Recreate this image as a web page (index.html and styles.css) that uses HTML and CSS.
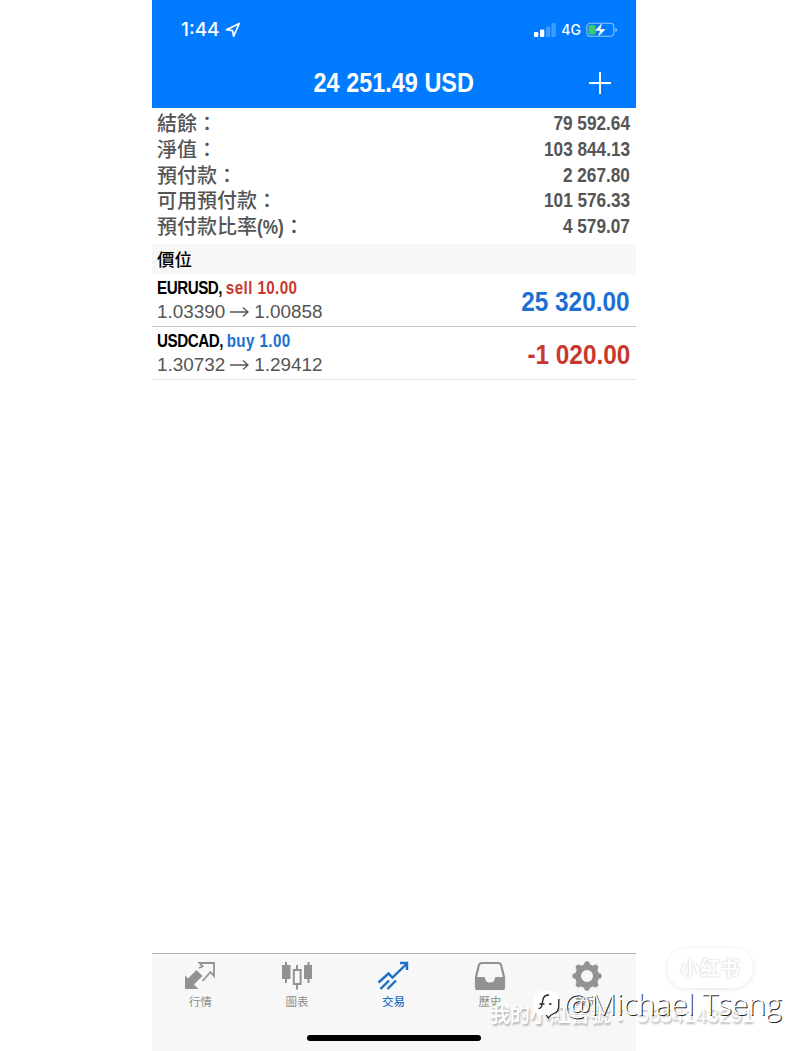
FILE: index.html
```html
<!DOCTYPE html>
<html lang="zh-Hant">
<head>
    <meta charset="UTF-8">
    <meta name="viewport" content="width=device-width, initial-scale=1.0">
    <title>交易</title>
    <link rel="stylesheet" href="styles.css">
</head>
<body>
    <div class="phone">
        <header>
            <div class="status-bar">
                <div class="status-time">
                    <span>1:44</span>
                    <svg width="16" height="16" viewBox="0 0 16 16" fill="none" stroke="currentColor" stroke-width="1.7" stroke-linejoin="round">
                        <path d="M14.2 1.5 1.5 7.7 7.5 8.6 8.7 14.2z"/>
                    </svg>
                </div>
                <div class="status-icons">
                    <svg width="22" height="14" viewBox="0 0 22 14" fill="#fff">
                        <rect x="0" y="9" width="4.3" height="5" rx="1"/>
                        <rect x="6" y="6.5" width="4.3" height="7.5" rx="1"/>
                        <rect x="12" y="3.5" width="4.3" height="10.5" rx="1" opacity=".25"/>
                        <rect x="17.5" y="0" width="4.3" height="14" rx="1" opacity=".25"/>
                    </svg>
                    <span>4G</span>
                    <svg width="32" height="18" viewBox="0 0 32 18">
                        <rect x=".8" y="2.3" width="27" height="13" rx="3.5" fill="none" stroke="#8fc5ee" stroke-width="1.1"/>
                        <rect x="2.5" y="4" width="7" height="9.6" rx="1.5" fill="#3cc871"/>
                        <path d="M29.4 6.7v4.4q1.8-.9 1.8-2.2t-1.8-2.2z" fill="#8fc5ee"/>
                        <path d="M16.8.8 8.5 10h5.3l-2.5 7L20 7.9h-5.3z" fill="#fff" stroke="#007aff" stroke-width=".5"/>
                    </svg>
                </div>
            </div>
            <div class="title-bar">
                <h1>24 251.49 USD</h1>
                <svg class="add" width="22" height="22" viewBox="0 0 22 22" stroke="#fff" stroke-width="2">
                    <path d="M11 0v22M0 11h22"/>
                </svg>
            </div>
        </header>

        <main>
            <div class="summary">
                <div class="summary-row"><span>結餘：</span><b>79 592.64</b></div>
                <div class="summary-row"><span>淨值：</span><b>103 844.13</b></div>
                <div class="summary-row"><span>預付款：</span><b>2 267.80</b></div>
                <div class="summary-row"><span>可用預付款：</span><b>101 576.33</b></div>
                <div class="summary-row"><span>預付款比率<span class="unit">(%)</span>：</span><b>4 579.07</b></div>
            </div>

            <h2>價位</h2>

            <div class="position">
                <div>
                    <div class="symbol">EURUSD, <span class="sell">sell 10.00</span></div>
                    <div class="prices">1.03390
                        <svg width="19" height="12" viewBox="0 0 19 12" fill="none" stroke="currentColor" stroke-width="1.3"><path d="M0 6h18M13 1.5 18 6l-5 4.5"/></svg>
                        1.00858</div>
                </div>
                <div class="profit buy">25 320.00</div>
            </div>
            <div class="position">
                <div>
                    <div class="symbol">USDCAD, <span class="buy">buy 1.00</span></div>
                    <div class="prices">1.30732
                        <svg width="19" height="12" viewBox="0 0 19 12" fill="none" stroke="currentColor" stroke-width="1.3"><path d="M0 6h18M13 1.5 18 6l-5 4.5"/></svg>
                        1.29412</div>
                </div>
                <div class="profit sell">-1 020.00</div>
            </div>
        </main>

        <nav>
            <div class="tab">
                <svg width="32" height="30" viewBox="0 0 32 30">
                    <path d="M1 28V14.500l3 3 8.500-8.500 6 6-8.500 8.500 4.500 4.500z" fill="#929292"/>
                    <path d="M15 7l3.500-1.500L15.500 2H30v13l-3.500-4L18.500 20" fill="none" stroke="#929292" stroke-width="1.800"/>
                </svg>
                <span>行情</span>
            </div>
            <div class="tab">
                <svg width="32" height="30" viewBox="0 0 32 30" fill="#929292">
                    <path d="M4 1h2v3h3.500v14H6v4H4v-4H1V4h3zM26.500 1h2v3H31v14h-2.500v4h-2v-4H23V4h3.500z"/>
                    <path d="M16 4v5M16 23v5.500M12.800 9h6.800v14h-6.800z" fill="none" stroke="#929292" stroke-width="2"/>
                </svg>
                <span>圖表</span>
            </div>
            <div class="tab active">
                <svg width="32" height="30" viewBox="0 0 32 30" fill="none" stroke="currentColor" stroke-width="2.4">
                    <path d="M1.500 21.500 11.500 12.500l4 4L29.500 3M23 2h7v7M3.500 28l8.500-8.500M10.500 28l8.500-8.500"/>
                </svg>
                <span>交易</span>
            </div>
            <div class="tab">
                <svg width="32" height="30" viewBox="0 0 32 30">
                    <path d="M7.500 2h17Q26.500 2 27.200 4.500L30 16v10.500Q30 28 28.500 28h-25Q2 28 2 26.500V16L4.800 4.500Q5.500 2 7.500 2z" fill="none" stroke="#929292" stroke-width="2.200"/>
                    <path d="M2 16h8q1.200 0 1.300 2 .3 3.500 4.700 3.500t4.700-3.500q.1-2 1.300-2h8v10.500q0 1.500-1.500 1.500h-25Q2 28 2 26.500z" fill="#929292"/>
                </svg>
                <span>歷史</span>
            </div>
            <div class="tab">
                <svg width="32" height="30" viewBox="0 0 32 30" fill="none" stroke="#929292">
                    <circle cx="16" cy="15" r="9" stroke-width="6"/>
                    <path d="M16 3v1M16 26v1M4 15h1M27 15h1M7.500 6.500l.7.700M23.800 22.800l.7.700M7.500 23.500l.7-.7M23.800 7.200l.7-.7" stroke-width="5.500" stroke-linecap="round"/>
                </svg>
                <span>設定</span>
            </div>
            <div class="home-indicator"></div>
        </nav>
    </div>

    <div class="badge">小红书</div>
    <div class="account-mark">我的小紅書號：<span>5654143291</span></div>
    <div class="author-mark">
        <svg width="27" height="30" viewBox="0 0 27 30">
            <path d="M9 1h9q8 0 8 8v8q0 6-5 7-3 1-6 4-1-3-3-3H9q-8 0-8-8V9q0-8 8-8z" fill="#fff"/>
            <path d="M5.500 18.500q3 0 3.500-4l1-5q.8-4.500 6-4.500M6.500 14h5M16 14h2.500M25.800 9v7q0 6-5 7.500-3 1-5.500 4.500l-2-3" fill="none" stroke="#222" stroke-width="1.300"/>
        </svg>
        <span>@Michael Tseng</span>
    </div>
</body>
</html>
```
FILE: styles.css
```css
* {
    margin: 0;
    padding: 0;
    box-sizing: border-box;
}

body {
    position: relative;
    height: 1051px;
    overflow: hidden;
    background: #fff;
    font-family: "Liberation Sans", "Noto Sans CJK TC", sans-serif;
}

.phone {
    display: flex;
    flex-direction: column;
    width: 484px;
    height: 1051px;
    margin: 0 auto;
}

header {
    height: 108px;
    background: #007aff;
    color: #fff;
}

.status-bar {
    display: flex;
    justify-content: space-between;
    align-items: center;
    height: 59px;
    padding: 0 18px 0 29px;
}

.status-time,
.status-icons {
    display: flex;
    align-items: center;
}

.status-time {
    gap: 5px;
    font: 500 19px Inter, sans-serif;
}

.status-icons {
    gap: 5px;
    font: 500 14px Inter, sans-serif;
}

.title-bar {
    display: grid;
    grid-template-columns: 1fr auto 1fr;
    align-items: center;
    height: 47px;
    padding-right: 25px;
    padding-left: 25px;
}

h1 {
    grid-column: 2;
    font: bold 28px "Liberation Sans", sans-serif;
    transform: scaleX(0.838);
}

.add {
    justify-self: end;
}

main {
    flex: 1;
}

.summary {
    height: 136px;
    padding: 2px 6px 0 5px;
    color: #555;
}

.summary-row {
    display: flex;
    justify-content: space-between;
    height: 25.8px;
    font: 500 20px/25px "Noto Sans CJK TC", sans-serif;
}

.summary-row b {
    font: bold 20px/27px "Liberation Sans", sans-serif;
    transform: scaleX(0.86);
    transform-origin: right;
}

.unit {
    display: inline-block;
    margin-right: -4px;
    font: bold 20px/25px "Liberation Sans", sans-serif;
    transform: scaleX(0.86);
    transform-origin: left;
}

h2 {
    height: 30px;
    padding-left: 5px;
    background: #f7f7f7;
    font: 500 17.5px/30px "Noto Sans CJK TC", sans-serif;
}

.position {
    display: flex;
    justify-content: space-between;
    align-items: center;
    height: 53px;
    padding: 0 6px 0 5px;
    border-bottom: 1px solid #c4c4c4;
}

.position:last-child {
    border-color: #e4e4e4;
}

.symbol {
    font: bold 19px/24px "Liberation Sans", sans-serif;
    letter-spacing: -0.6px;
    transform: scaleX(0.8);
    transform-origin: left;
}

.symbol span {
    letter-spacing: 0.5px;
}

.prices {
    display: flex;
    align-items: center;
    gap: 5px;
    color: #555;
    font-size: 18.9px;
    line-height: 24px;
}

.profit {
    padding-top: 3px;
    font: bold 28px "Liberation Sans", sans-serif;
    transform: scaleX(0.87);
    transform-origin: right;
}

.buy {
    color: #1e6fd2;
}

.sell {
    color: #c8382f;
}

nav {
    position: relative;
    display: flex;
    height: 98px;
    padding: 7px 1px 0 0;
    background: #f7f7f7;
    border-top: 1px solid #b2b2b2;
}

.tab {
    display: flex;
    flex: 1;
    flex-direction: column;
    align-items: center;
    color: #8e8e8e;
    font: 11.5px/17px "Noto Sans CJK TC", sans-serif;
}

.tab span {
    margin-top: 2px;
}

.tab.active {
    color: #1e6fc8;
    font-weight: 500;
}

.home-indicator {
    position: absolute;
    bottom: 10px;
    left: 155px;
    width: 174px;
    height: 6px;
    border-radius: 3px;
    background: #000;
}

.badge {
    position: absolute;
    top: 948px;
    left: 667px;
    width: 86px;
    height: 40px;
    border-radius: 20px;
    background: #fff;
    box-shadow: 0 1px 5px rgba(0, 0, 0, 0.1);
    color: #fff;
    font: bold 20px/39px "Noto Sans CJK SC", sans-serif;
    text-align: center;
    text-shadow: 0 0 2px #bbb;
}

.account-mark {
    position: absolute;
    top: 999px;
    left: 490px;
    color: #fff;
    font: 500 20px/30px "Noto Sans CJK TC", sans-serif;
    text-shadow: 1px 2px 2px rgba(0, 0, 0, 0.3);
    white-space: nowrap;
}

.account-mark span {
    margin-left: 7px;
    font: 21px "Liberation Sans", sans-serif;
}

.author-mark {
    position: absolute;
    top: 983px;
    left: 533px;
    display: flex;
    align-items: center;
    gap: 4px;
    height: 40px;
    color: #fff;
    font: 300 30px "Open Sans", sans-serif;
    text-shadow: 1px 1px 0 #222;
    white-space: nowrap;
}

.author-mark svg {
    margin-top: 3px;
}
```
